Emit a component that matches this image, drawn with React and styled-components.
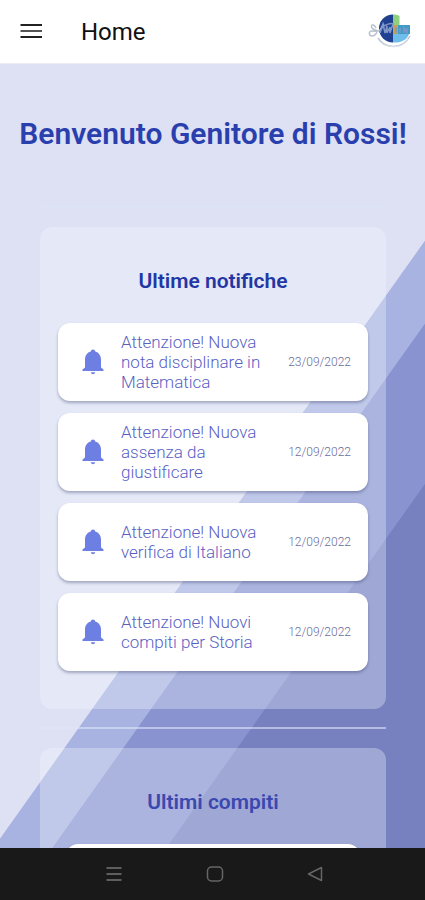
import React from "react";
import styled, { createGlobalStyle } from "styled-components";

const GlobalStyle = createGlobalStyle`
  * {
    box-sizing: border-box;
    margin: 0;
    padding: 0;
  }
  body {
    font-family: Roboto, "Noto Sans", sans-serif;
  }
  button {
    border: none;
    background: none;
    cursor: pointer;
  }
`;

const Screen = styled.div`
  display: flex;
  flex-direction: column;
  height: 100vh;
  overflow: hidden;
`;
const Header = styled.header`
  display: flex;
  align-items: center;
  flex: none;
  height: 64px;
  padding: 0 12px 0 19px;
  background-color: #ffffff;
  border-bottom: 1px solid #eceef4;
`;
const IconButton = styled.button`
  display: flex;
  justify-content: center;
  align-items: center;
  width: 24px;
  height: 24px;
`;
const PageName = styled.span`
  flex: 1;
  padding-left: 38px;
  font-size: 24px;
  line-height: 28px;
  color: #111111;
`;
const Content = styled.main`
  flex: 1;
  min-height: 0;
  overflow: hidden;
  padding: 52px 39px 0 40px;
  background: linear-gradient(
    125.4deg,
    #dee0f4 56%,
    #a8b3e1 56.1%,
    #a8b3e1 62%,
    #8993d0 62.1%,
    #8993d0 73.6%,
    #7881c0 73.7%
  );
`;
const Welcome = styled.h1`
  margin: 0 -24px;
  font-size: 30px;
  line-height: 36px;
  font-weight: 600;
  text-align: center;
  color: #2a3fae;
`;
const Divider = styled.hr`
  height: 2px;
  border: none;
  margin-top: ${(props) => props.$top};
  background-color: ${(props) => props.$color};
`;
const Panel = styled.section`
  margin-top: 19px;
  padding: 40px 18px 38px;
  border-radius: 12px;
  background-color: rgba(243, 250, 255, 0.32);
`;
const PanelTitle = styled.h2`
  margin-bottom: 28px;
  font-size: 21px;
  line-height: 28px;
  font-weight: 600;
  text-align: center;
  color: ${(props) => props.$color};
`;
const List = styled.ul`
  display: flex;
  flex-direction: column;
  gap: 12px;
  padding: 0 ${(props) => props.$inset || "0"};
  list-style: none;
`;
const Card = styled.li`
  display: flex;
  align-items: center;
  height: 78px;
  padding: 0 17px 0 21px;
  border-radius: 12px;
  background-color: #ffffff;
  box-shadow: 0 2px 3px rgba(40, 45, 90, 0.35);
`;
const Message = styled.p`
  flex: 1;
  padding: 0 12px 0 14px;
  font-size: 17px;
  line-height: 20px;
  font-weight: 300;
  color: #5a5fc4;
`;
const DateText = styled.time`
  font-size: 12px;
  line-height: 16px;
  font-weight: 300;
  color: #6b6d9c;
`;
const SystemBar = styled.nav`
  display: flex;
  justify-content: space-between;
  align-items: center;
  flex: none;
  height: 52px;
  padding: 0 23% 0 24%;
  background-color: #191919;
`;

const MenuIcon = () => (
  <svg width="24" height="24" viewBox="0 0 24 24" stroke="#222222" strokeWidth="2">
    <path d="M1.500 5h21.500M1.500 17h21.500" />
    <path d="M1.500 11h21.500" stroke="#555555" />
  </svg>
);

const Logo = () => (
  <svg width="46" height="38" viewBox="0 0 46 38" fill="none" role="img" aria-label="Logo">
    <path d="M26 1.500A14 14 0 0 0 26 29.500Z" fill="#1f3f8f" />
    <path d="M26 1.500c3 0 5 .5 6.500 1.500V12H26Z" fill="#8ed07f" />
    <path d="M26 21h16c-2 6-8 9-16 8.500Z" fill="#6fbdea" />
    <path d="M31 12h12v9H31Z" fill="#3f9cc4" />
    <path d="M26 12h5v9h-5Z" fill="#c3a35a" />
    <path
      d="M9 15c-2-5-6-3-4 0s5 1 5 3-2 5-5 5-4-5 0-5 6 1 8-1 2-5 4-6"
      stroke="#b9c2cf"
      strokeWidth="1.500"
    />
    <path d="M11 25c6 10 24 13 32-2" stroke="#bcc6d6" strokeWidth="1.500" />
    <path d="M15 29c8 7 21 6 26-3" stroke="#dde3ec" strokeWidth="1" />
    <path
      d="M13 20l3-9 2 9 2-7v7l3-6v6l3-9M29 20v-6M33 20v-5M37 20v-5l3 5v-5M15 15c3-4 9-5 12-4"
      stroke="#7f96ca"
      strokeWidth="1.500"
    />
  </svg>
);

const BellIcon = () => (
  <svg width="28" height="28" viewBox="0 0 28 28" fill="#6d7fe2">
    <path d="M14 1.500c1.200 0 2.100.8 2.200 2 3.700 1 5.800 4 5.800 8v8l2.500 2v1.500h-21v-1.500l2.500-2v-8c0-4 2.100-7 5.800-8 .1-1.200 1-2 2.200-2Z" />
    <path d="M11.800 24.200h4.400c-.3 1.300-1.100 2-2.200 2s-1.900-.7-2.200-2Z" />
  </svg>
);

const notifications = [
  { text: "Attenzione! Nuova nota disciplinare in Matematica", date: "23/09/2022" },
  { text: "Attenzione! Nuova assenza da giustificare", date: "12/09/2022" },
  { text: "Attenzione! Nuova verifica di Italiano", date: "12/09/2022" },
  { text: "Attenzione! Nuovi compiti per Storia", date: "12/09/2022" },
];

const App = () => {
  return (
    <Screen>
      <GlobalStyle />
      <Header>
        <IconButton aria-label="Menu">
          <MenuIcon />
        </IconButton>
        <PageName>Home</PageName>
        <Logo />
      </Header>
      <Content>
        <Welcome>Benvenuto Genitore di Rossi!</Welcome>
        <Divider $top="54px" $color="#dce3f5" />
        <Panel>
          <PanelTitle $color="#2337a4">Ultime notifiche</PanelTitle>
          <List>
            {notifications.map((item) => (
              <Card key={item.text}>
                <BellIcon />
                <Message>{item.text}</Message>
                <DateText>{item.date}</DateText>
              </Card>
            ))}
          </List>
        </Panel>
        <Divider $top="18px" $color="rgba(222, 228, 250, 0.6)" />
        <Panel>
          <PanelTitle $color="#3a48b0">Ultimi compiti</PanelTitle>
          <List $inset="8px">
            <Card />
          </List>
        </Panel>
      </Content>
      <SystemBar>
        <IconButton aria-label="App recenti">
          <svg width="18" height="18" viewBox="0 0 18 18" stroke="#5e5e5e" strokeWidth="2">
            <path d="M1.500 3h15M1.500 9h15M1.500 15h15" />
          </svg>
        </IconButton>
        <IconButton aria-label="Schermata principale">
          <svg width="18" height="18" viewBox="0 0 18 18" fill="none" stroke="#666666" strokeWidth="1.500">
            <rect x="1.500" y="2" width="15" height="14" rx="4" />
          </svg>
        </IconButton>
        <IconButton aria-label="Indietro">
          <svg width="18" height="18" viewBox="0 0 18 18" fill="none" stroke="#666666" strokeWidth="1.500" strokeLinejoin="round">
            <path d="M15.500 2.500v13L2.500 9Z" />
          </svg>
        </IconButton>
      </SystemBar>
    </Screen>
  );
};

export default App;
